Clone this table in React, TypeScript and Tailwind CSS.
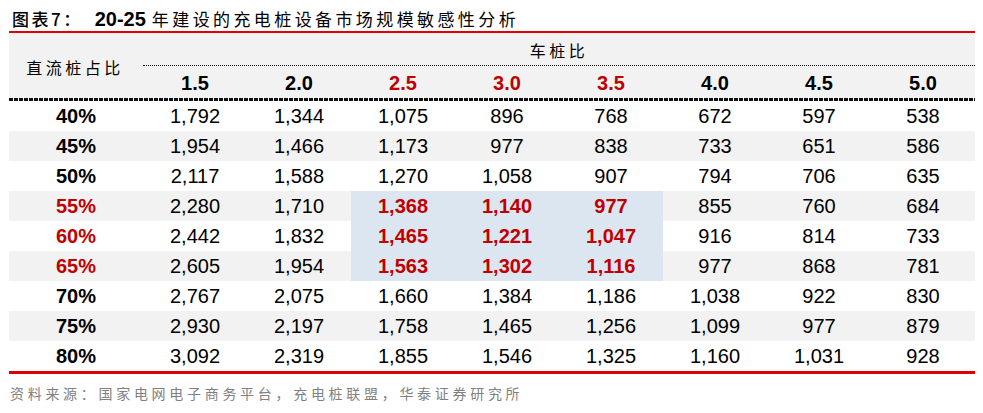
import React from 'react';

const cols = ['1.5', '2.0', '2.5', '3.0', '3.5', '4.0', '4.5', '5.0'];
const hotCols = [2, 3, 4];

const rows: { label: string; values: string[] }[] = [
  { label: '40%', values: ['1,792', '1,344', '1,075', '896', '768', '672', '597', '538'] },
  { label: '45%', values: ['1,954', '1,466', '1,173', '977', '838', '733', '651', '586'] },
  { label: '50%', values: ['2,117', '1,588', '1,270', '1,058', '907', '794', '706', '635'] },
  { label: '55%', values: ['2,280', '1,710', '1,368', '1,140', '977', '855', '760', '684'] },
  { label: '60%', values: ['2,442', '1,832', '1,465', '1,221', '1,047', '916', '814', '733'] },
  { label: '65%', values: ['2,605', '1,954', '1,563', '1,302', '1,116', '977', '868', '781'] },
  { label: '70%', values: ['2,767', '2,075', '1,660', '1,384', '1,186', '1,038', '922', '830'] },
  { label: '75%', values: ['2,930', '2,197', '1,758', '1,465', '1,256', '1,099', '977', '879'] },
  { label: '80%', values: ['3,092', '2,319', '1,855', '1,546', '1,325', '1,160', '1,031', '928'] },
];
const hotRows = [3, 4, 5];

const cjk = "font-['Noto_Sans_CJK_SC',sans-serif]";
const num = "font-['Liberation_Sans',Arial,sans-serif]";

const App: React.FC = () => {
  return (
    <div className="w-[983px] h-[413px] bg-white pl-[9px] pr-[8px] pt-[6px] text-black">
      {/* title */}
      <div className="h-[25px] flex items-center text-[17px] leading-none">
        <span className={`${cjk} font-medium tracking-[2.5px] pl-[3px]`}>图表7：</span>
        <span className={`${num} font-bold text-[20px] ml-[12px] mr-[6px]`}>20-25</span>
        <span className={`${cjk} tracking-[3.4px]`}>年建设的充电桩设备市场规模敏感性分析</span>
      </div>
      <div className="h-[2px] bg-[#e00000]" />

      {/* header */}
      <div className="flex bg-[#f2f2f2] h-[65px]">
        <div className={`w-[134px] flex items-center justify-center pt-[3px] pr-[2px] text-[16px] tracking-[3.5px] ${cjk}`}>
          直流桩占比
        </div>
        <div className="flex-1 flex flex-col">
          <div className={`h-[35px] flex items-center justify-center pt-[2px] text-[16px] tracking-[3.5px] ${cjk}`}>
            车桩比
          </div>
          <div className="border-t border-dotted border-black" />
          <div className="flex-1 grid grid-cols-8">
            {cols.map((c, i) => (
              <div
                key={c}
                className={`flex items-center justify-center pt-[2px] font-bold text-[20px] ${num} ${
                  hotCols.includes(i) ? 'text-[#c00000]' : ''
                }`}
              >
                {c}
              </div>
            ))}
          </div>
        </div>
      </div>
      <div className="h-[3px] bg-[repeating-linear-gradient(90deg,#111_0_4px,transparent_4px_5px)]" />

      {/* body */}
      {rows.map((r, ri) => {
        const hotRow = hotRows.includes(ri);
        return (
          <div key={r.label} className={`flex h-[30px] ${ri % 2 === 1 ? 'bg-[#f2f2f2]' : 'bg-white'}`}>
            <div
              className={`w-[134px] flex items-center justify-center font-bold text-[20px] ${num} ${
                hotRow ? 'text-[#c00000]' : ''
              }`}
            >
              {r.label}
            </div>
            <div className="flex-1 grid grid-cols-8">
              {r.values.map((v, ci) => {
                const hot = hotRow && hotCols.includes(ci);
                return (
                  <div
                    key={ci}
                    className={`flex items-center justify-center text-[20px] ${num} ${
                      hot ? 'bg-[#dce6f1] text-[#c00000] font-bold' : ''
                    }`}
                  >
                    {v}
                  </div>
                );
              })}
            </div>
          </div>
        );
      })}
      <div className="h-[3px] bg-[#e00000]" />

      {/* source */}
      <div className={`mt-[12px] pl-[1px] text-[14px] leading-none tracking-[3.7px] text-[#808080] ${cjk}`}>
        资料来源：国家电网电子商务平台，充电桩联盟，华泰证券研究所
      </div>
    </div>
  );
};

export default App;
